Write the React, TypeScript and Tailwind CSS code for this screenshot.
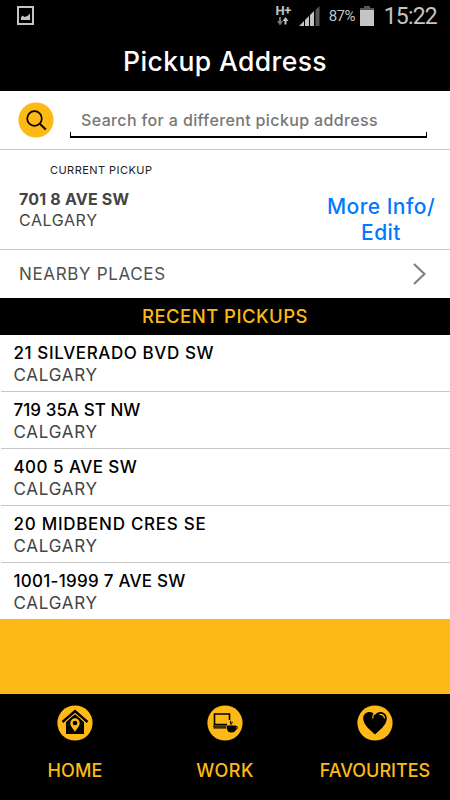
import type { ReactNode } from "react";

const recents = [
  { address: "21 SILVERADO BVD SW", city: "CALGARY", spacing: "tracking-[0.6px]" },
  { address: "719 35A ST NW", city: "CALGARY", spacing: "tracking-[0.05px]" },
  { address: "400 5 AVE SW", city: "CALGARY", spacing: "tracking-[0.45px]" },
  { address: "20 MIDBEND CRES SE", city: "CALGARY", spacing: "tracking-[0.72px]" },
  { address: "1001-1999 7 AVE SW", city: "CALGARY", spacing: "tracking-[0.25px]" },
];

const StatusBar = () => (
  <div className="flex h-8 items-center justify-between pl-[17px] pr-[13px] font-[Roboto,sans-serif] text-[#c4c4c4]">
    <svg className="mb-px h-[19px] w-[17px]" viewBox="0 0 17 19">
      <path d="M1 1h15v17H1z" fill="none" stroke="currentColor" strokeWidth="2" />
      <path d="M4 14v-2.500l1.500-2 2 1.500 3-1L13 7.500V14z" fill="currentColor" />
    </svg>
    <div className="flex h-full items-center">
      <div className="mb-0.5 mr-[7px] flex w-[17px] flex-col items-center">
        <span className="h-3 text-[13px] font-bold leading-[11px] tracking-[-0.5px]">H+</span>
        <svg className="h-[9px] w-3" viewBox="0 0 12 9">
          <path d="M2 0h2v4h2L3 8.500 0 4h2z" fill="#777" />
          <path d="M7.500 7.500V4h-2l3-4 3 4h-2v3.500z" fill="currentColor" />
        </svg>
      </div>
      <svg className="mr-[9px] h-5 w-[21px]" viewBox="0 0 21 20">
        <path d="M0 20l5-5v5zM6 14l4-4v10H6zM11 9l4-4v15h-4z" fill="currentColor" />
        <path d="M16.500 4l4-4v20h-4z" fill="#555" />
      </svg>
      <span className="mr-1 w-[27px] whitespace-nowrap text-[15px] tracking-[-0.6px]">87%</span>
      <svg className="mr-[10px] h-5 w-[14px]" viewBox="0 0 14 20">
        <path d="M4 0h6v3H4zM0 2h14v3H0z" fill="#555" />
        <path d="M0 4h14v16H0z" fill="currentColor" />
      </svg>
      <span className="pt-0.5 text-[23px] leading-8 tracking-[-0.8px]">15:22</span>
    </div>
  </div>
);

const Badge = ({ children }: { children: ReactNode }) => (
  <svg className="h-9 w-9" viewBox="0 0 36 36" fill="none" stroke="#000">
    <circle cx="18" cy="18" r="17.600" fill="#fdb916" stroke="none" />
    {children}
  </svg>
);

const Tab = ({ label, spacing, children }: { label: string; spacing: string; children: ReactNode }) => (
  <a className="flex flex-1 flex-col items-center pt-[11px]">
    <Badge>{children}</Badge>
    <span className={`mt-[18px] text-[18px] font-medium leading-6 ${spacing}`}>{label}</span>
  </a>
);

const App = () => {
  return (
    <div className="flex h-[800px] w-[450px] flex-col overflow-hidden bg-white font-[Inter,sans-serif]">
      <header className="h-[91px] bg-black">
        <StatusBar />
        <h1 className="pt-[13px] text-center text-[26.500px] font-medium leading-8 tracking-[0.4px] text-white">Pickup Address</h1>
      </header>

      <div className="flex h-[59px] items-start border-b border-[#c8c8c8] pl-[18px] pt-[11px]">
        <Badge>
          <circle cx="16.500" cy="16.500" r="7.300" strokeWidth="1.700" />
          <path d="M22 22l5.800 5.500" strokeWidth="2" />
        </Badge>
        <div className="ml-4 mt-1 flex w-[357px] flex-col">
          <span className="h-[26px] whitespace-nowrap pl-[11px] pt-[2px] text-[16px] font-medium leading-6 tracking-[0.37px] text-[#777]">
            Search for a different pickup address
          </span>
          <div className="h-[6px] border-x border-b-2 border-black" />
        </div>
      </div>

      <section className="flex h-[100px] justify-between border-b border-[#c8c8c8] pl-[19px] pr-[14px]">
        <div className="flex flex-col">
          <span className="pl-[31px] pt-[12px] text-[11px] leading-4 tracking-[0.45px] text-[#222]">CURRENT PICKUP</span>
          <span className="mt-[11px] text-[16px] font-bold leading-[21px] tracking-[0.2px] text-[#444]">701 8 AVE SW</span>
          <span className="text-[16px] leading-[21px] tracking-[0.6px] text-[#444]">CALGARY</span>
        </div>
        <a className="mt-[44px] w-[110px] whitespace-nowrap text-center text-[21px] font-medium leading-[25.500px] tracking-[0.45px] text-[#007aff]">
          More Info/
          <br />
          Edit
        </a>
      </section>

      <div className="flex h-12 items-center justify-between pl-[19px] pr-6">
        <span className="pt-0.5 text-[17px] tracking-[0.65px] text-[#505050]">NEARBY PLACES</span>
        <svg className="h-[22px] w-[13px]" viewBox="0 0 13 22">
          <path d="M1 1l10.500 10L1 21" fill="none" stroke="#808080" strokeWidth="2.200" />
        </svg>
      </div>

      <h2 className="h-[37px] bg-black text-center text-[18.500px] font-medium leading-[37px] tracking-[0.45px] text-[#fdb916]">RECENT PICKUPS</h2>

      <ul className="pl-px">
        {recents.map((item) => (
          <li key={item.address} className="flex h-[57px] flex-col border-b border-[#c8c8c8] pl-[12.5px] pt-[7px] last:h-14 last:border-b-0">
            <span className={`text-[17px] font-medium leading-[22px] text-black ${item.spacing}`}>{item.address}</span>
            <span className="text-[17px] leading-[22px] tracking-[0.75px] text-[#444]">{item.city}</span>
          </li>
        ))}
      </ul>

      <div className="h-[75px] bg-[#fdb916]" />

      <nav className="flex h-[106px] bg-black text-[#fdb916]">
        <Tab label="HOME" spacing="tracking-[0.1px]">
          <path d="M5.500 17L18 6.200 30.500 17" strokeWidth="2.500" />
          <path d="M9 17l9-8 9 8v12H9z" fill="#000" stroke="none" />
          <path d="M7 18L18 8.500 29 18" stroke="#fdb916" strokeWidth="1" />
          <path d="M18 27c-1-3-4.700-5-4.700-9a4.700 4.700 0 0 1 9.400 0C22.700 22 19 24 18 27z" fill="#fdb916" stroke="none" />
          <circle cx="18" cy="18" r="2.300" fill="#000" stroke="none" />
        </Tab>
        <Tab label="WORK" spacing="tracking-[0.5px]">
          <path d="M22.500 15V9h-15v10.500H20" strokeWidth="1.600" />
          <path d="M6 21.200h13.500M6.500 22.800h13" strokeWidth="1.200" />
          <path d="M20 20.500h9v2.500c0 3-1.500 4.500-4.500 4.500S20 26 20 23z" fill="#000" stroke="none" />
          <path d="M28.500 21.500h1.300c1 2-.3 3-1.800 3M23.800 20c1.200-1.500-1.500-2 0-4.300M24.500 18.500l1-1.500" strokeWidth="1.100" />
        </Tab>
        <Tab label="FAVOURITES" spacing="tracking-[0px]">
          <path d="M18 29.500C14 25.500 6.500 20.500 6.200 13.500c-.2-7 8.800-8.500 11.800-3.500 3-5 12-3.500 11.800 3.500-.3 7-7.800 12-11.800 16z" fill="#000" stroke="none" />
          <path d="M15.800 13.500c-.2-2.500.2-4 1.700-5.500M22.500 9.500c2.800-.3 4.700 1.500 5 4" stroke="#fdb916" strokeWidth="1.200" />
        </Tab>
      </nav>
    </div>
  );
};

export default App;
